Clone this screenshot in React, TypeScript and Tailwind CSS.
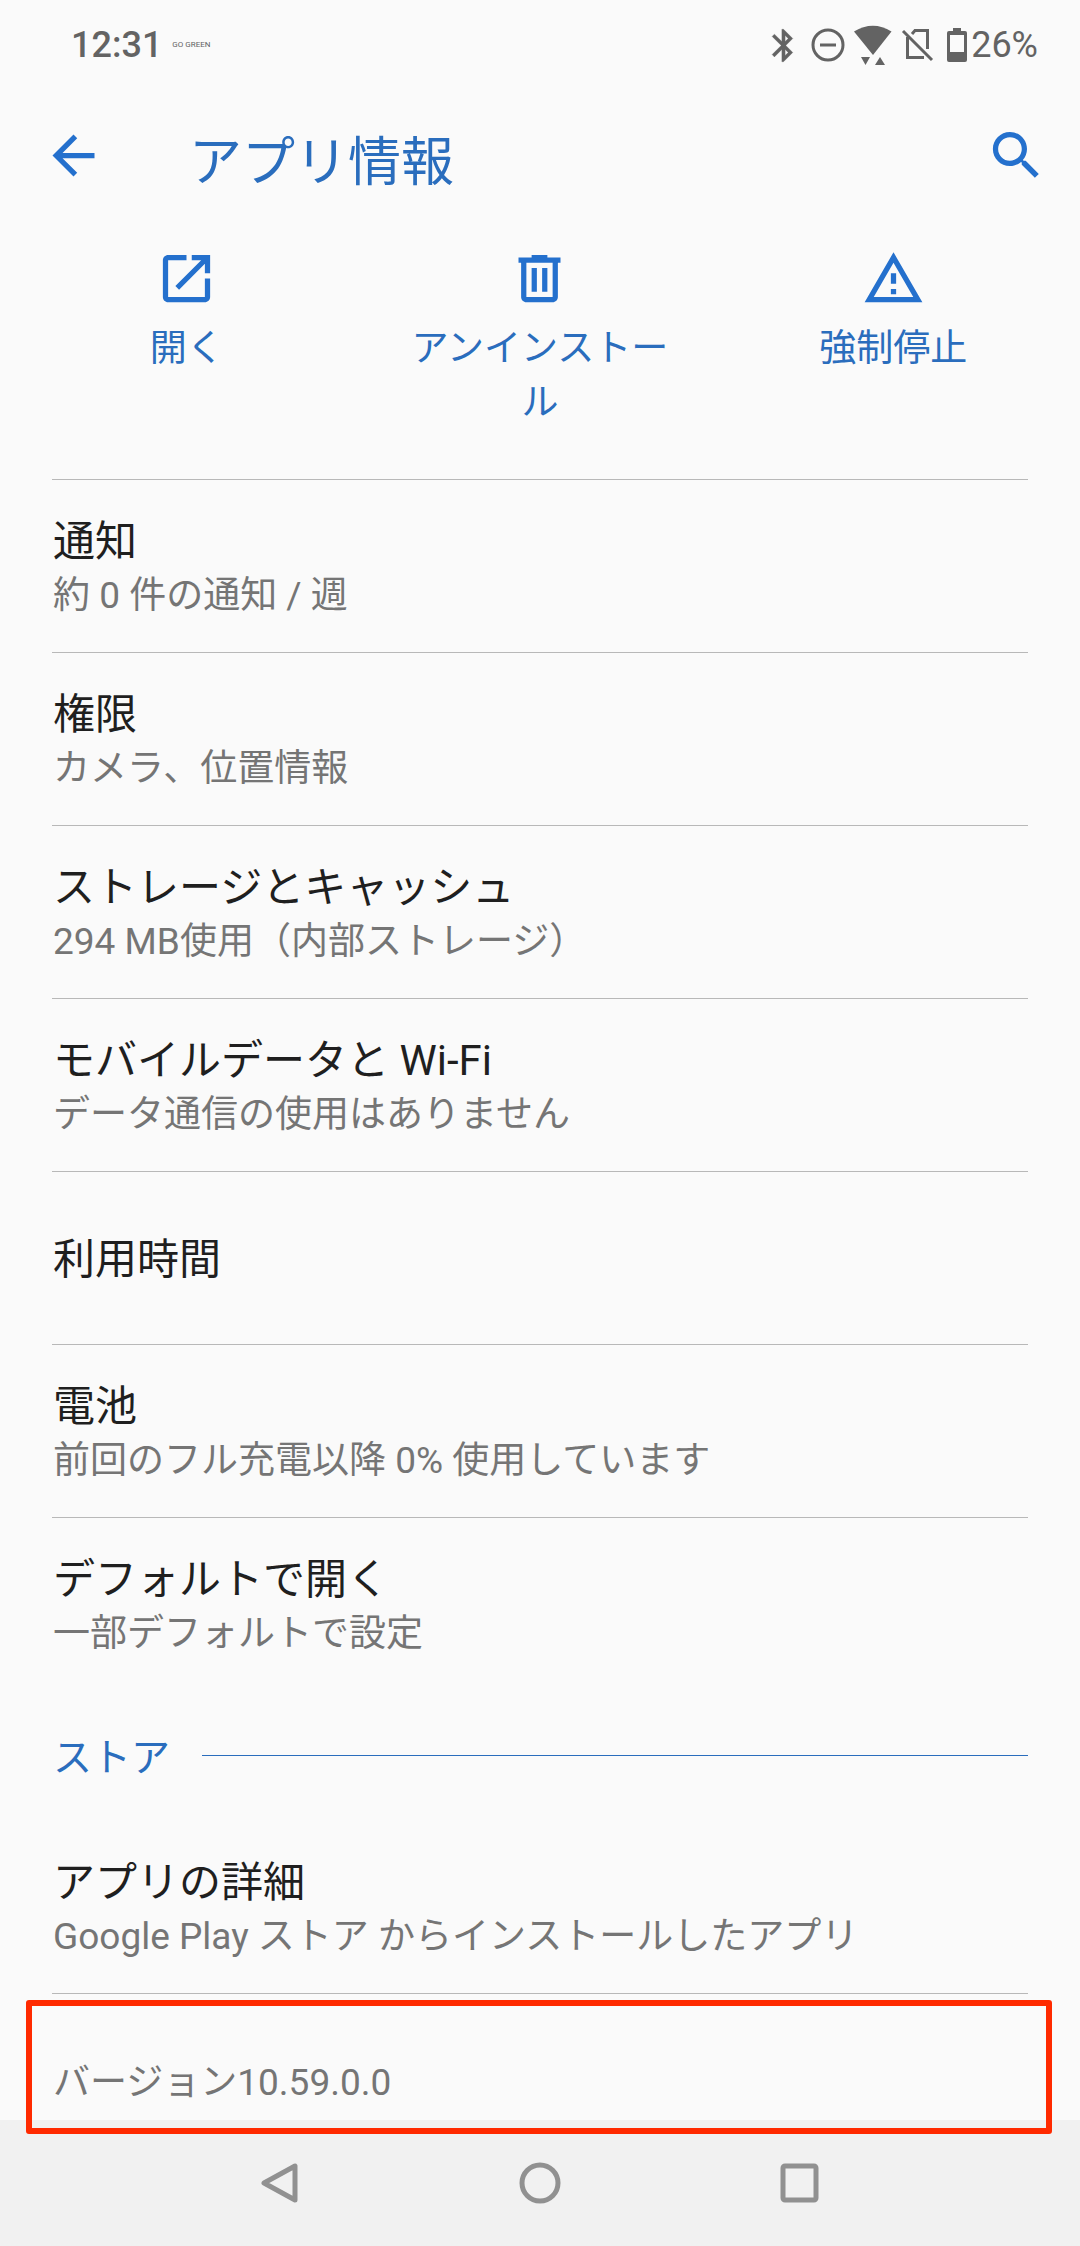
/* App info screen of the Android settings.
 * Status bar, header, quick actions, list of settings and the navigation bar.
*/

import type { ReactNode } from "react";

interface IconProps {
    path: string;
}

interface ActionProps {
    label: string;
    path: string;
}

interface SettingRowProps {
    title: string;
    summary?: string;
    last?: boolean; // last row of a section has no line below it
}

const icons = {
    back: "M20 11H7.83l5.59-5.59L12 4l-8 8 8 8 1.41-1.41L7.83 13H20v-2z",
    search: "M15.5 14h-.79l-.28-.27C15.41 12.59 16 11.11 16 9.5 16 5.91 13.09 3 9.5 3S3 5.91 3 9.5 5.91 16 9.5 16c1.61 0 3.09-.59 4.23-1.57l.27.28v.79l5 4.99L20.49 19l-4.99-5zm-6 0C7.01 14 5 11.99 5 9.5S7.01 5 9.5 5 14 7.01 14 9.5 11.99 14 9.5 14z",
    open: "M19 19H5V5h7V3H5c-1.11 0-2 .9-2 2v14c0 1.1.89 2 2 2h14c1.1 0 2-.9 2-2v-7h-2v7zM14 3v2h3.59l-9.83 9.83 1.41 1.41L19 6.41V10h2V3h-7z",
    trash: "M15 4V3H9v1H4v2h1v13c0 1.1.9 2 2 2h10c1.1 0 2-.9 2-2V6h1V4h-5zm2 15H7V6h10v13zM9 8h2v9H9V8zm4 0h2v9h-2V8z",
    warning: "M12 5.99L19.53 19H4.47L12 5.99M12 2L1 21h22L12 2zm1 14h-2v2h2v-2zm0-6h-2v4h2v-4z",
};

const actions = [
    { label: "開く", path: icons.open },
    { label: "アンインストール", path: icons.trash },
    { label: "強制停止", path: icons.warning },
];

const settings = [
    { title: "通知", summary: "約 0 件の通知 / 週" },
    { title: "権限", summary: "カメラ、位置情報" },
    { title: "ストレージとキャッシュ", summary: "294 MB使用（内部ストレージ）" },
    { title: "モバイルデータと Wi-Fi", summary: "データ通信の使用はありません" },
    { title: "利用時間" },
    { title: "電池", summary: "前回のフル充電以降 0% 使用しています" },
    { title: "デフォルトで開く", summary: "一部デフォルトで設定" },
];

function Icon({ path }: IconProps) {
    return (
      <svg viewBox="0 0 24 24" className="size-[63px] shrink-0" fill="currentColor" aria-hidden="true">
        <path d={path} />
      </svg>
    );
}

function StatusBar() {
    return (
      <div className="flex h-[90px] items-center pl-[71px] pr-[42px] text-[36px] leading-none text-[#636363]">
        <span className="font-medium">12:31</span>
        <span className="ml-[10px] text-[8px]">GO GREEN</span>
        <div className="ml-auto flex items-center">
          {/* Bluetooth */}
          <svg width="39" height="39" viewBox="0 0 24 24" fill="currentColor" stroke="currentColor" strokeWidth="0.2" aria-hidden="true">
            <path d="M17.71 7.71L12 2h-1v7.59L6.41 5 5 6.41 10.59 12 5 17.59 6.41 19 11 14.41V22h1l5.71-5.71-4.3-4.29 4.3-4.29zM13 5.83l1.88 1.88L13 9.59V5.83zm1.88 10.46L13 18.17v-3.76l1.88 1.88z" />
          </svg>
          {/* Do not disturb */}
          <svg width="34" height="34" viewBox="0 0 34 34" fill="none" stroke="currentColor" strokeWidth="3" className="ml-2" aria-hidden="true">
            <circle cx="17" cy="17" r="15" />
            <path d="M9 17h16" />
          </svg>
          {/* Wi-Fi with traffic arrows */}
          <svg width="40" height="44" viewBox="0 0 40 44" fill="currentColor" className="ml-2" aria-hidden="true">
            <path d="M1 8.500Q20-3 38.500 8.500L20 32z" />
            <path d="M8 34h9l-4.500 8zM22 42h10l-5-8z" />
          </svg>
          {/* No SIM */}
          <svg width="34" height="36" viewBox="0 0 34 36" fill="none" stroke="currentColor" strokeWidth="3" className="ml-2" aria-hidden="true">
            <path d="M2 4l29 29M11 7l3-3.500h12.500V22M6.500 10v20.500H23" />
          </svg>
          {/* Battery */}
          <svg width="20" height="34" viewBox="0 0 20 34" className="ml-3" aria-hidden="true">
            <path fill="currentColor" fillRule="evenodd" d="M6 0h8v3h4q2 0 2 2v27q0 2-2 2H2q-2 0-2-2V5q0-2 2-2h4zM3 7v17h14V7z" />
          </svg>
          <span className="ml-1">26%</span>
        </div>
      </div>
    );
}

function Action({ label, path }: ActionProps) {
    return (
      <button type="button" className="flex flex-col items-center gap-3 px-10">
        <Icon path={path} />
        <span className="text-[37px] leading-[54px] break-all text-[#2a6dbd]">{label}</span>
      </button>
    );
}

function SettingRow({ title, summary, last }: SettingRowProps) {
    return (
      <li className={last ? "" : "border-b border-[#b8b8b8]"}>
        <button type="button" className="flex min-h-[172px] w-full flex-col justify-center pt-1 pl-px text-left">
          <span className="text-[42px] leading-[56px] text-[#1f1f1f]">{title}</span>
          {summary && <span className="text-[37px] leading-[52px] text-[#757575]">{summary}</span>}
        </button>
      </li>
    );
}

function NavButton({ label, children }: { label: string; children: ReactNode }) {
    return (
      <button type="button" aria-label={label} className="flex items-center justify-center">
        <svg width="44" height="44" viewBox="0 0 44 44" fill="none" stroke="currentColor" strokeWidth="5" strokeLinejoin="round" aria-hidden="true">
          {children}
        </svg>
      </button>
    );
}

export default function App() {
    return (
      <div lang="ja" className="flex min-h-screen flex-col bg-[#fafafa] font-['Roboto','Noto_Sans_CJK_JP',sans-serif]">
        <StatusBar />

        <header className="flex h-[130px] items-center pl-[42px] pr-8 text-[#2470cd]">
          <button type="button" aria-label="戻る">
            <Icon path={icons.back} />
          </button>
          <h1 className="ml-[84px] flex-1 pt-4 text-[53px] leading-[72px] text-[#2a6dbd]">アプリ情報</h1>
          <button type="button" aria-label="検索">
            <Icon path={icons.search} />
          </button>
        </header>

        <main className="flex flex-1 flex-col">
          <div className="grid grid-cols-3 items-start px-[10px] pt-[27px] pb-[49px] text-[#2470cd]">
            {actions.map(action => (
              <Action key={action.label} label={action.label} path={action.path} />
            ))}
          </div>

          <ul className="mx-[52px] border-t border-[#b8b8b8]">
            {settings.map((setting, index) => (
              <SettingRow
                key={setting.title}
                title={setting.title}
                summary={setting.summary}
                last={index === settings.length - 1}
              />
            ))}
          </ul>

          <div className="mx-[52px] flex h-[131px] items-center gap-8 pl-px text-[#2a6dbd]">
            <h2 className="pt-1 text-[39px] leading-[52px]">ストア</h2>
            <div className="h-px flex-1 bg-[#2a6dbd]" />
          </div>

          <ul className="mx-[52px]">
            <SettingRow title="アプリの詳細" summary="Google Play ストア からインストールしたアプリ" />
          </ul>

          {/* Version, with the red frame laid over it */}
          <div className="relative flex flex-1 items-end px-[53px] pt-[61px] pb-[11px]">
            <p className="text-[37px] leading-[52px] text-[#757575]">バージョン10.59.0.0</p>
            <div className="pointer-events-none absolute top-[6px] right-7 -bottom-[14px] left-[26px] rounded-[3px] border-6 border-[#ff2a00]" />
          </div>
        </main>

        <nav className="grid h-[126px] grid-cols-3 bg-[#f1f1f1] px-[150px] text-[#919191]">
          <NavButton label="戻る">
            <path d="M6 22L37 5v34z" />
          </NavButton>
          <NavButton label="ホーム">
            <circle cx="22" cy="22" r="18" />
          </NavButton>
          <NavButton label="最近のアプリ">
            <rect x="5" y="5" width="33" height="34" rx="2" />
          </NavButton>
        </nav>
      </div>
    );
}
